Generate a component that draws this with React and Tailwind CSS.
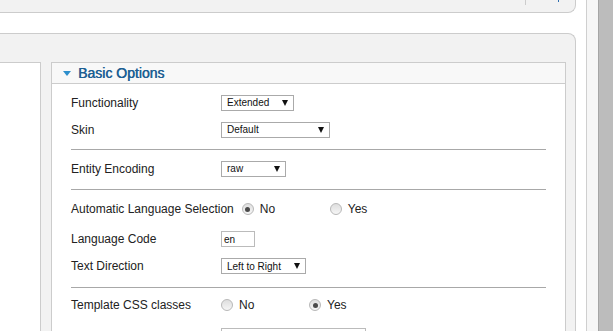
import React from 'react'

const Arrow = () => (
  <svg width="6" height="6" viewBox="0 0 6 6" className="shrink-0">
    <polygon points="0,0 6,0 3,6" fill="#111" />
  </svg>
)

const Select = ({ value, w }) => (
  <div className={`${w} h-[16px] border border-[#aaa] bg-white flex items-center justify-between pl-[5px] pr-[5px] text-[10px] text-[#111]`}>
    <span>{value}</span>
    <Arrow />
  </div>
)

const Radio = ({ label, checked }) => (
  <div className="w-[88px] flex items-center gap-[6px]">
    <span className="w-[12px] h-[12px] rounded-full border border-[#b8b8b8] bg-linear-to-b from-[#dedede] to-[#f6f6f6] flex items-center justify-center">
      {checked && <span className="w-[5px] h-[5px] rounded-full bg-[#4a4a4a]" />}
    </span>
    <span>{label}</span>
  </div>
)

const Row = ({ h, label, children }) => (
  <div className={`${h} flex items-center`}>
    <span className="min-w-[150px] pr-[8px]">{label}</span>
    {children}
  </div>
)

const Sep = ({ mt }) => <div className={`${mt} h-px bg-[#a8a8a8]`} />

export default function App() {
  return (
    <div className="w-[613px] h-[331px] overflow-hidden flex bg-white font-['Liberation_Sans',Arial,sans-serif] text-[12px] text-[#222]">
      <div className="w-[576px] flex flex-col">
        {/* toolbar remnant */}
        <div className="h-[13px] shrink-0 bg-[#f2f2f2] border-b border-r border-[#ccc] rounded-br-[8px] flex justify-end items-start pr-[16px]">
          <div className="w-px h-[5px] bg-[#ccc]" />
          <div className="ml-[32px] w-px h-[2px] bg-[#2f6fb0]" />
        </div>

        <div className="mt-[20px] flex-1 bg-[#f2f2f2] border-t border-r border-[#ccc] rounded-tr-[8px] flex pt-[28px]">
          <div className="w-[41px] bg-white border-t border-r border-[#ccc]" />

          <div className="ml-[10px] w-[515px] bg-white border border-[#ccc] border-b-0">
            <div className="h-[21px] bg-[#f8f8f8] border-b border-[#ccc] flex items-center pl-[11px]">
              <svg width="8" height="5" viewBox="0 0 8 5">
                <polygon points="0,0 8,0 4,5" fill="#2e8fcc" />
              </svg>
              <span className="ml-[7px] text-[14px] text-[#1d5f93] [text-shadow:0.4px_0_0_#1d5f93]">Basic Options</span>
            </div>

            <div className="pl-[19px] pr-[19px]">
              <div className="pt-[5px]">
                <Row h="h-[27px]" label="Functionality">
                  <Select w="w-[73px]" value="Extended" />
                </Row>
                <Row h="h-[27px]" label="Skin">
                  <Select w="w-[109px]" value="Default" />
                </Row>
              </div>
              <Sep mt="mt-[6px]" />

              <Row h="h-[37px]" label="Entity Encoding">
                <Select w="w-[65px]" value="raw" />
              </Row>
              <Sep mt="mt-[2px]" />

              <Row h="h-[38px]" label="Automatic Language Selection">
                <Radio label="No" checked />
                <Radio label="Yes" />
              </Row>
              <Row h="h-[22px]" label="Language Code">
                <div className="w-[34px] h-[16px] border border-[#bbb] flex items-center pl-[2px] text-[10px] text-[#111]">en</div>
              </Row>
              <Row h="h-[32px]" label="Text Direction">
                <Select w="w-[85px]" value="Left to Right" />
              </Row>
              <Sep mt="mt-[5px]" />

              <Row h="h-[34px]" label="Template CSS classes">
                <Radio label="No" />
                <Radio label="Yes" checked />
              </Row>
              <div className="mt-[6px] ml-[150px] w-[145px] h-[16px] border border-[#bbb]" />
            </div>
          </div>
        </div>
      </div>

      {/* window edge and scrollbar */}
      <div className="w-[10px] bg-white" />
      <div className="w-px bg-[#cfcfcf]" />
      <div className="w-[11px] bg-[#f6f6f6]" />
      <div className="w-px bg-[#a5a5a5]" />
      <div className="w-[14px] bg-[#bcbcbc]" />
    </div>
  )
}
